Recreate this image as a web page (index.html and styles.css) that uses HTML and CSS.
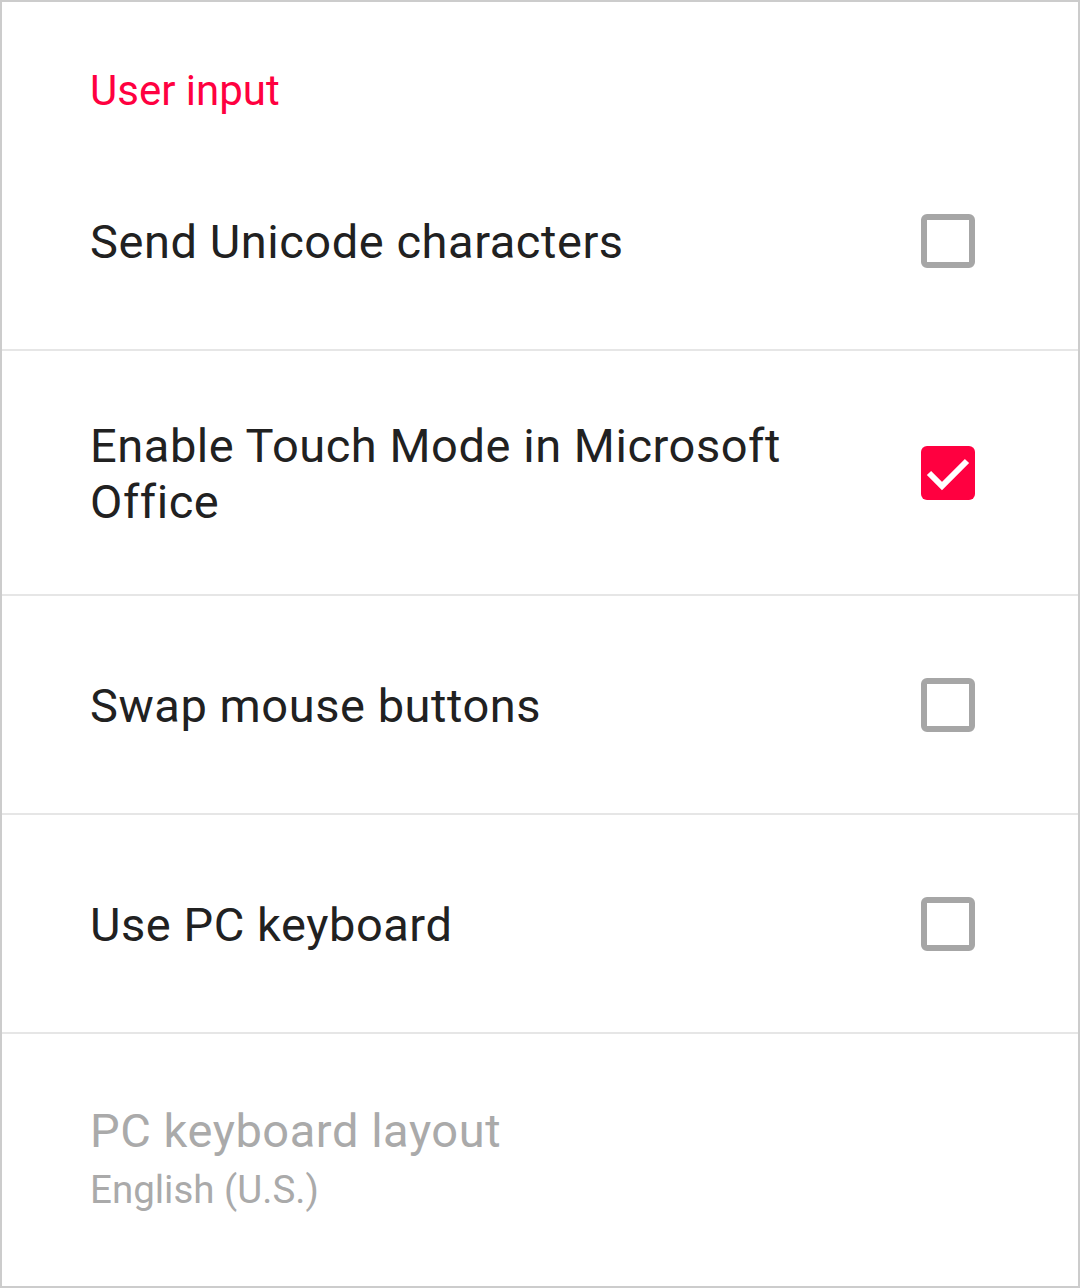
FILE: index.html
```html
<!DOCTYPE html>
<html>
<head>
    <meta charset="UTF-8">
    <title>User input</title>
    <link rel="stylesheet" href="styles.css">
</head>
<body>
    <div class="screen">
        <div class="category">User input</div>

        <div class="pref">
            <div class="pref-text">Send Unicode characters</div>
            <span class="checkbox"></span>
        </div>
        <div class="pref">
            <div class="pref-text">Enable Touch Mode in Microsoft Office</div>
            <span class="checkbox checked">
                <svg viewBox="0 0 54 54" width="54" height="54">
                    <polyline points="8,27 21,40 46,15" fill="none" stroke="#fff" stroke-width="6"/>
                </svg>
            </span>
        </div>
        <div class="pref">
            <div class="pref-text">Swap mouse buttons</div>
            <span class="checkbox"></span>
        </div>
        <div class="pref">
            <div class="pref-text">Use PC keyboard</div>
            <span class="checkbox"></span>
        </div>
        <div class="pref pref-disabled">
            <div class="pref-text">
                <div class="title">PC keyboard layout</div>
                <div class="summary">English (U.S.)</div>
            </div>
        </div>
    </div>
</body>
</html>
```

FILE: styles.css
```css
html, body {
    margin: 0;
    background-color: white;
}
body {
    font-family: Roboto, "Noto Sans", sans-serif;
    color: #212121;
}
.screen {
    width: 1080px;
    height: 1288px;
    box-sizing: border-box;
    border: 2px solid #cccccc;
    overflow: hidden;
}
.category {
    height: 130px;
    box-sizing: border-box;
    padding: 64px 0 0 88px;
    font-size: 42px;
    line-height: 50px;
    color: #ff0040;
}
.pref {
    display: flex;
    align-items: center;
    min-height: 217px;
    padding: 0 103px 0 88px;
    border-bottom: 2px solid #e6e6e6;
}
.pref-text {
    flex: 1;
    font-size: 47px;
    letter-spacing: 0.55px;
    line-height: 56px;
    padding: 67px 110px 64px 0;
}
.checkbox {
    flex: none;
    width: 54px;
    height: 54px;
    box-sizing: border-box;
    border: 6px solid #a6a6a6;
    border-radius: 6px;
}
.checkbox.checked {
    background-color: #ff0040;
    border: none;
}
.checkbox svg {
    display: block;
}
.pref-disabled {
    align-items: flex-start;
    border-bottom: none;
    color: #aaaaaa;
}
.pref-disabled .pref-text {
    padding-top: 69px;
}
.summary {
    font-size: 38.5px;
    letter-spacing: 0;
    line-height: 62px;
}
```
